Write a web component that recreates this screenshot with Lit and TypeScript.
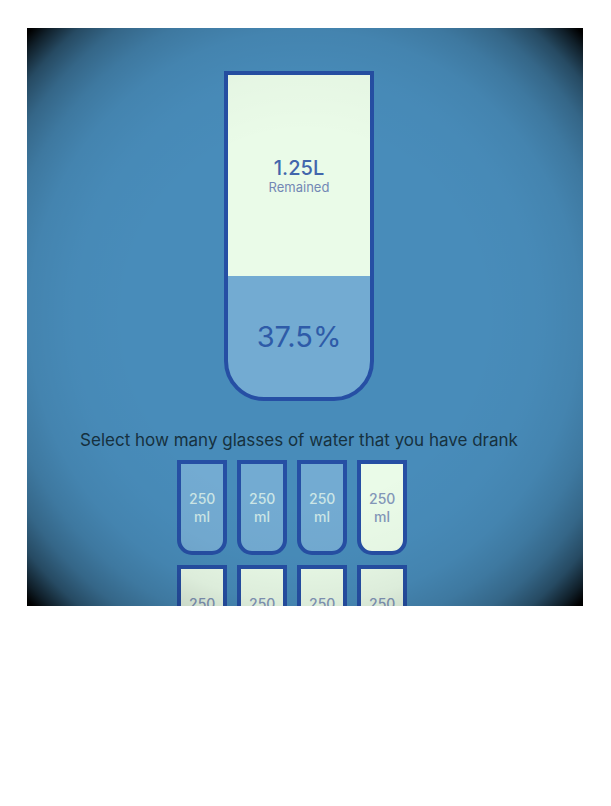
import { LitElement, html, css } from "lit";
import { customElement, state } from "lit/decorators.js";
import { classMap } from "lit/directives/class-map.js";
import { styleMap } from "lit/directives/style-map.js";

const GLASSES = 8;
const GLASS_ML = 250;

@customElement("app-root")
export class AppRoot extends LitElement {
  @state() private drunk = 3;

  static styles = css`
    :host {
      display: flex;
      flex-direction: column;
      box-sizing: border-box;
      height: 100vh;
      padding: 28px 28px 200px 27px;
      background: #fff;
      font-family: Inter, "Liberation Sans", sans-serif;
      --ink: #264fa4;
      --water: #73abd2;
      --empty: #eafbe8;
    }
    .panel {
      position: relative;
      flex: 1;
      min-height: 0;
      box-sizing: border-box;
      overflow: hidden;
      padding: 43px 12px 0 0;
      display: flex;
      flex-direction: column;
      align-items: center;
      background: #488cba;
    }
    .panel > * {
      flex-shrink: 0;
    }
    .vignette {
      position: absolute;
      inset: 0;
      pointer-events: none;
      background: radial-gradient(
        ellipse farthest-corner,
        rgba(0, 0, 0, 0) 45%,
        rgba(0, 0, 0, 0.02) 60%,
        rgba(0, 0, 0, 0.06) 70%,
        rgba(0, 0, 0, 0.14) 78%,
        rgba(0, 0, 0, 0.27) 85%,
        rgba(0, 0, 0, 0.47) 91%,
        rgba(0, 0, 0, 0.78) 96%,
        #000 99%
      );
    }
    .tank {
      box-sizing: border-box;
      width: 150px;
      height: 330px;
      border: 4px solid var(--ink);
      border-radius: 0 0 40px 40px;
      overflow: hidden;
      display: flex;
      flex-direction: column;
      background: var(--water);
      color: var(--ink);
      text-align: center;
    }
    .remaining {
      flex: 1;
      display: flex;
      flex-direction: column;
      justify-content: center;
      background: var(--empty);
    }
    .litres {
      font-size: 20px;
      line-height: 22px;
      font-weight: 500;
      color: #4266ac;
    }
    .caption {
      font-size: 13px;
      line-height: 16px;
      color: #7388b5;
    }
    .filled {
      display: flex;
      align-items: center;
      justify-content: center;
      font-size: 29px;
      color: #2e5ba8;
    }
    .prompt {
      margin: 29px 0 10px;
      font-size: 17px;
      line-height: 20px;
      font-weight: 400;
      color: #16313f;
      white-space: nowrap;
    }
    .glasses {
      display: flex;
      flex-wrap: wrap;
      gap: 10px;
      width: 244px;
    }
    .glass {
      box-sizing: border-box;
      width: 50px;
      height: 95px;
      margin: 0;
      padding: 0 8px;
      border: 4px solid var(--ink);
      border-radius: 0 0 15px 15px;
      background: var(--empty);
      color: #8397b8;
      font-family: inherit;
      font-size: 14px;
      font-weight: 500;
      line-height: 18px;
      text-align: center;
      cursor: pointer;
    }
    .glass.full {
      background: var(--water);
      color: #cce6e6;
    }
    .amount {
      display: block;
    }
  `;

  private select(index: number) {
    this.drunk = this.drunk === index + 1 ? index : index + 1;
  }

  render() {
    const share = (this.drunk / GLASSES) * 100;
    const left = ((GLASSES - this.drunk) * GLASS_ML) / 1000;
    return html`
      <main class="panel">
        <section class="tank" aria-label="Daily water">
          <div class="remaining">
            <div class="litres">${left}L</div>
            <div class="caption">Remained</div>
          </div>
          <div class="filled" style=${styleMap({ height: `${share}%` })}>
            ${share ? `${share}%` : ""}
          </div>
        </section>
        <p class="prompt">Select how many glasses of water that you have drank</p>
        <div class="glasses">
          ${Array.from(
            { length: GLASSES },
            (_, i) => html`<button
              type="button"
              class=${classMap({ glass: true, full: i < this.drunk })}
              aria-pressed=${i < this.drunk ? "true" : "false"}
              @click=${() => this.select(i)}
            >
              <span class="amount">${GLASS_ML}</span>
              <span class="amount">ml</span>
            </button>`
          )}
        </div>
        <div class="vignette"></div>
      </main>
    `;
  }
}
